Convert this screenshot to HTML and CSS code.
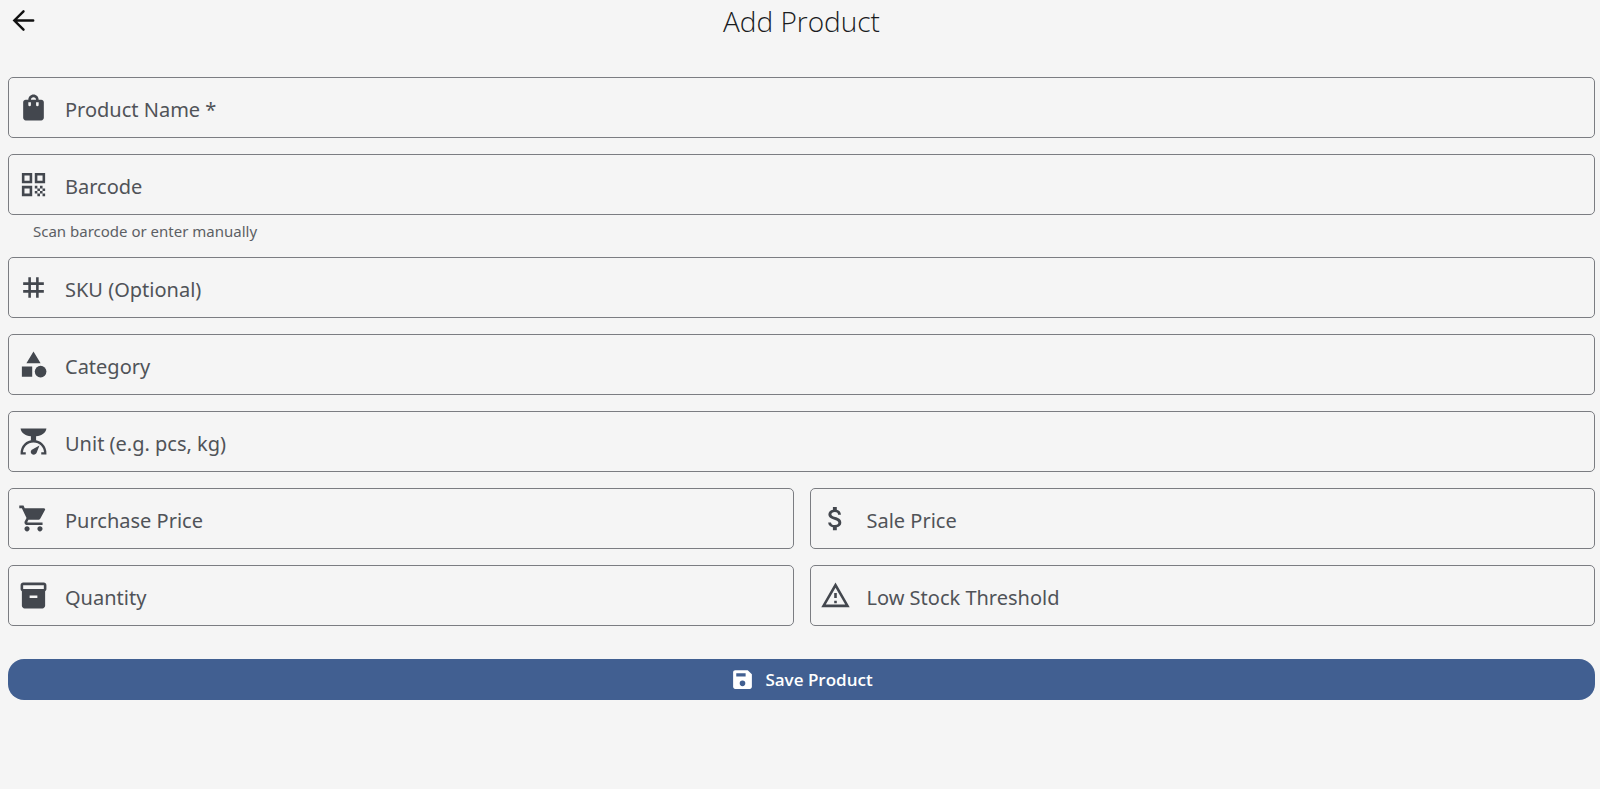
FILE: index.html
```html
<!DOCTYPE html>
<html lang="en">
<head>
<meta charset="utf-8">
<meta name="viewport" content="width=device-width, initial-scale=1">
<title>Add Product</title>
<link rel="stylesheet" href="styles.css">
</head>
<body>
<header class="topbar">
  <button class="back" type="button" aria-label="Back">
    <svg class="icon" viewBox="0 0 24 24"><path d="M19.500 12H5M12 4.900L4.900 12l7.100 7.100" fill="none" stroke="currentColor" stroke-width="1.900" stroke-linecap="round"/></svg>
  </button>
  <h1 class="title">Add Product</h1>
</header>
<main>
  <form class="form">
    <div class="field">
      <svg class="icon" viewBox="0 0 24 24"><path fill-rule="evenodd" d="M18 6h-2c0-2.210-1.790-4-4-4S8 3.790 8 6H6c-1.100 0-2 .9-2 2v12c0 1.100.9 2 2 2h12c1.100 0 2-.9 2-2V8c0-1.100-.9-2-2-2zm-6-2c1.100 0 2 .9 2 2h-4c0-1.100.9-2 2-2zM8 8h2v2a1 1 0 0 1-2 0zm6 0h2v2a1 1 0 0 1-2 0z"/></svg>
      <label for="name">Product Name *</label>
      <input id="name" type="text" required>
    </div>
    <div class="group">
      <div class="field">
        <svg class="icon" viewBox="0 0 24 24"><path fill-rule="evenodd" d="M3 11h8V3H3v8zm2-6h4v4H5V5zM3 21h8v-8H3v8zm2-6h4v4H5v-4zM13 3v8h8V3h-8zm6 6h-4V5h4v4zM19 19h2v2h-2zM13 13h2v2h-2zM15 15h2v2h-2zM13 17h2v2h-2zM15 19h2v2h-2zM17 17h2v2h-2zM17 13h2v2h-2zM19 15h2v2h-2z"/></svg>
        <label for="barcode">Barcode</label>
        <input id="barcode" type="text" aria-describedby="barcode-help">
      </div>
      <p class="help" id="barcode-help">Scan barcode or enter manually</p>
    </div>
    <div class="field">
      <svg class="icon" viewBox="0 0 24 24"><path fill-rule="evenodd" d="M20 10V8h-4V4h-2v4h-4V4H8v4H4v2h4v4H4v2h4v4h2v-4h4v4h2v-4h4v-2h-4v-4h4zm-6 4h-4v-4h4v4z"/></svg>
      <label for="sku">SKU (Optional)</label>
      <input id="sku" type="text">
    </div>
    <div class="field">
      <svg class="icon" viewBox="0 0 24 24"><path d="M12 2l-5.500 9h11zM3 13.500h8v8H3z"/><circle cx="17.500" cy="17.500" r="4.500"/></svg>
      <label for="category">Category</label>
      <input id="category" type="text">
    </div>
    <div class="field">
      <svg class="icon" viewBox="0 0 24 24"><path d="M2 2h20c-.4 3.200-3.600 5.700-8 6v3.500h-4V8C5.600 7.700 2.400 5.200 2 2z"/><path d="M6 21.200H2.900C2.900 15.600 6.900 11.800 12 11.800s9.100 3.800 9.100 9.400H18" fill="none" stroke="currentColor" stroke-width="1.800"/><path d="M16.600 15l-2.100 5.600c-.6 1.500-2.400 2-3.600 1.200-1.300-.9-1.400-2.500-.2-3.500z"/></svg>
      <label for="unit">Unit (e.g. pcs, kg)</label>
      <input id="unit" type="text">
    </div>
    <div class="pair">
      <div class="field">
        <svg class="icon" viewBox="0 0 24 24"><path d="M7 18c-1.100 0-1.990.9-1.990 2S5.900 22 7 22s2-.9 2-2-.9-2-2-2zM1 2v2h2l3.600 7.590-1.350 2.450c-.16.28-.25.61-.25.960 0 1.100.9 2 2 2h12v-2H7.420c-.14 0-.25-.11-.25-.25l.03-.12.9-1.630h7.450c.75 0 1.410-.41 1.750-1.030l3.580-6.490A1 1 0 0 0 20 4H5.210l-.94-2H1zm16 16c-1.100 0-1.990.9-1.990 2s.89 2 1.990 2 2-.9 2-2-.9-2-2-2z"/></svg>
        <label for="purchase">Purchase Price</label>
        <input id="purchase" type="text" inputmode="decimal">
      </div>
      <div class="field">
        <svg class="icon" viewBox="0 0 24 24"><path d="M11.800 10.900c-2.270-.59-3-1.200-3-2.150 0-1.090 1.010-1.850 2.700-1.850 1.780 0 2.440.85 2.500 2.100h2.210c-.07-1.720-1.120-3.300-3.210-3.810V3h-3v2.160c-1.940.42-3.500 1.680-3.500 3.610 0 2.310 1.910 3.460 4.700 4.130 2.500.6 3 1.480 3 2.410 0 .69-.49 1.790-2.700 1.790-2.060 0-2.870-.92-2.980-2.100h-2.200c.12 2.190 1.760 3.420 3.680 3.830V21h3v-2.150c1.950-.37 3.500-1.500 3.500-3.550 0-2.840-2.430-3.810-4.700-4.400z"/></svg>
        <label for="sale">Sale Price</label>
        <input id="sale" type="text" inputmode="decimal">
      </div>
    </div>
    <div class="pair">
      <div class="field">
        <svg class="icon" viewBox="0 0 24 24"><path fill-rule="evenodd" d="M20 2H4c-1 0-2 .9-2 2v3.010c0 .72.43 1.340 1 1.690V20c0 1.100 1.100 2 2 2h14c.9 0 2-.9 2-2V8.700c.57-.35 1-.97 1-1.690V4c0-1.100-1-2-2-2zm-5 12H9v-2h6v2zm5-7H4V4h16v3z"/></svg>
        <label for="quantity">Quantity</label>
        <input id="quantity" type="text" inputmode="numeric">
      </div>
      <div class="field">
        <svg class="icon" viewBox="0 0 24 24"><path fill-rule="evenodd" d="M12 5.990L19.530 19H4.470L12 5.990M12 2L1 21h22L12 2z"/><path d="M11 16h2v2h-2zM11 10h2v4h-2z"/></svg>
        <label for="threshold">Low Stock Threshold</label>
        <input id="threshold" type="text" inputmode="numeric">
      </div>
    </div>
    <button class="save" type="submit">
      <svg class="save-icon" viewBox="0 0 24 24"><path fill-rule="evenodd" d="M17 3H5c-1.110 0-2 .9-2 2v14c0 1.100.89 2 2 2h14c1.100 0 2-.9 2-2V7zM12 13a2.700 2.700 0 1 1 0 5.400 2.700 2.700 0 0 1 0-5.400zM6 6h9v3H6z"/></svg>
      <span>Save Product</span>
    </button>
  </form>
</main>
</body>
</html>
```
FILE: styles.css
```css
* { box-sizing: border-box; }

body {
  margin: 0;
  background: #f5f5f5;
  color: #43474e;
  font-family: "Noto Sans", "Open Sans", sans-serif;
}

.topbar {
  display: grid;
  grid-template-columns: 48px 1fr 48px;
  align-items: center;
  height: 44px;
  padding: 0 0 2px 3px;
  color: #1a1c1e;
}

.back {
  display: flex;
  padding: 0 0 2px 5px;
  border: 0;
  background: none;
  color: #111;
}

.title {
  margin: 0;
  text-align: center;
  font-family: "Open Sans", "Noto Sans", sans-serif;
  font-size: 28px;
  line-height: 42px;
  font-weight: 300;
}

.icon {
  flex: none;
  width: 31px;
  height: 31px;
  fill: currentColor;
}

.form {
  display: flex;
  flex-direction: column;
  gap: 16px;
  padding: 33px 5px 32px 8px;
}

.field {
  display: flex;
  align-items: center;
  height: 61px;
  padding: 0 16px 0 9px;
  border: 1px solid #7b7d82;
  border-radius: 5px;
}

.field label {
  padding: 4px 0 0 16px;
  color: #505358;
  font-size: 20px;
  line-height: 28px;
  white-space: nowrap;
}

.field input {
  flex: 1;
  min-width: 0;
  height: 100%;
  padding: 0 8px;
  border: 0;
  outline: 0;
  background: none;
  color: inherit;
  font: inherit;
  font-size: 20px;
}

.help {
  margin: 0;
  padding: 7px 25px 0;
  color: #5c5f64;
  font-size: 15px;
  line-height: 19px;
}

.pair {
  display: grid;
  grid-template-columns: 1fr 1fr;
  gap: 16px;
}

.save {
  display: flex;
  align-items: center;
  justify-content: center;
  gap: 10px;
  height: 41px;
  margin-top: 17px;
  padding: 0 24px;
  border: 0;
  border-radius: 16px;
  background: #415f91;
  color: #fff;
  font-family: "Open Sans", "Noto Sans", sans-serif;
  font-size: 17px;
  font-weight: 600;
}

.save-icon {
  width: 25px;
  height: 25px;
  fill: currentColor;
}
```
